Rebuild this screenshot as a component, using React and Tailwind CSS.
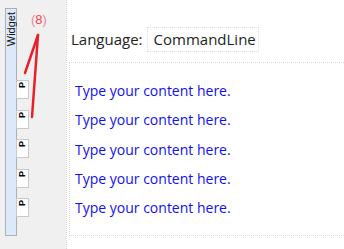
import React from 'react';

const rows = [1, 2, 3, 4, 5];

const Annotation = () => (
  <div className="absolute left-0 top-0 pointer-events-none">
    <span className="absolute left-[31px] top-[13px] text-[13px] leading-none text-[#ff4040] whitespace-nowrap [font-family:'Liberation_Sans',sans-serif]">
      <span className="text-[#f080a0]">(</span>8<span className="text-[#f080a0]">)</span>
    </span>
    <svg width="60" height="130" className="absolute left-0 top-0">
      <path d="M38 35 L25 73" stroke="#e8202a" strokeWidth="2.5" strokeLinecap="round" fill="none" />
      <path d="M38 35 L32 117" stroke="#e8202a" strokeWidth="2.5" strokeLinecap="round" fill="none" />
    </svg>
  </div>
);

export default function App() {
  return (
    <div className="flex w-[344px] h-[249px] bg-white overflow-hidden [font-family:'Open_Sans',sans-serif]">
      {/* left toolbox */}
      <div className="relative w-[66px] shrink-0 bg-[#f0f0f0] flex items-start pl-[5px] pt-[8px]">
        <div className="w-[12px] h-[228px] bg-[#dce9fb] border border-[#a8b0b8] flex items-start justify-center pt-[3px]">
          <span className="[writing-mode:vertical-rl] rotate-180 text-[11px] leading-none text-[#111] [font-family:'Liberation_Sans',sans-serif]">
            Widget
          </span>
        </div>
        <div className="flex flex-col gap-[10.5px] mt-[72px] -ml-[1px]">
          {rows.map((r) => (
            <div key={r} className="w-[13px] h-[19px] bg-white border border-[#c8c8c8] flex items-start justify-center pt-[1px]">
              <span className="[writing-mode:vertical-rl] rotate-180 text-[9px] leading-none text-black font-bold [font-family:'Liberation_Sans',sans-serif]">
                P
              </span>
            </div>
          ))}
        </div>
        <Annotation />
      </div>

      {/* editor */}
      <div className="flex-1 border-l border-dotted border-[#d8d8d8] pl-[2px] flex flex-col">
        <div className="flex items-center h-[25px] mt-[27px]">
          <span className="text-[15px] text-[#1e1e1e] ml-[2px] leading-none">Language:</span>
          <div className="ml-[4px] w-[112px] h-[25px] border border-dotted border-[#dcdcdc] flex items-center pl-[6px]">
            <span className="text-[15px] text-[#1e1e1e] leading-none">CommandLine</span>
          </div>
        </div>
        <div className="mt-[10px] h-[174px] border border-dotted border-[#d8d8d8] border-r-0 pl-[5px] pt-[18px] flex flex-col gap-[9.25px]">
          {rows.map((r) => (
            <div key={r} className="h-[20px] flex items-center text-[14px] text-[#1010f0] leading-none whitespace-nowrap">
              Type your content here.
            </div>
          ))}
        </div>
      </div>
    </div>
  );
}
